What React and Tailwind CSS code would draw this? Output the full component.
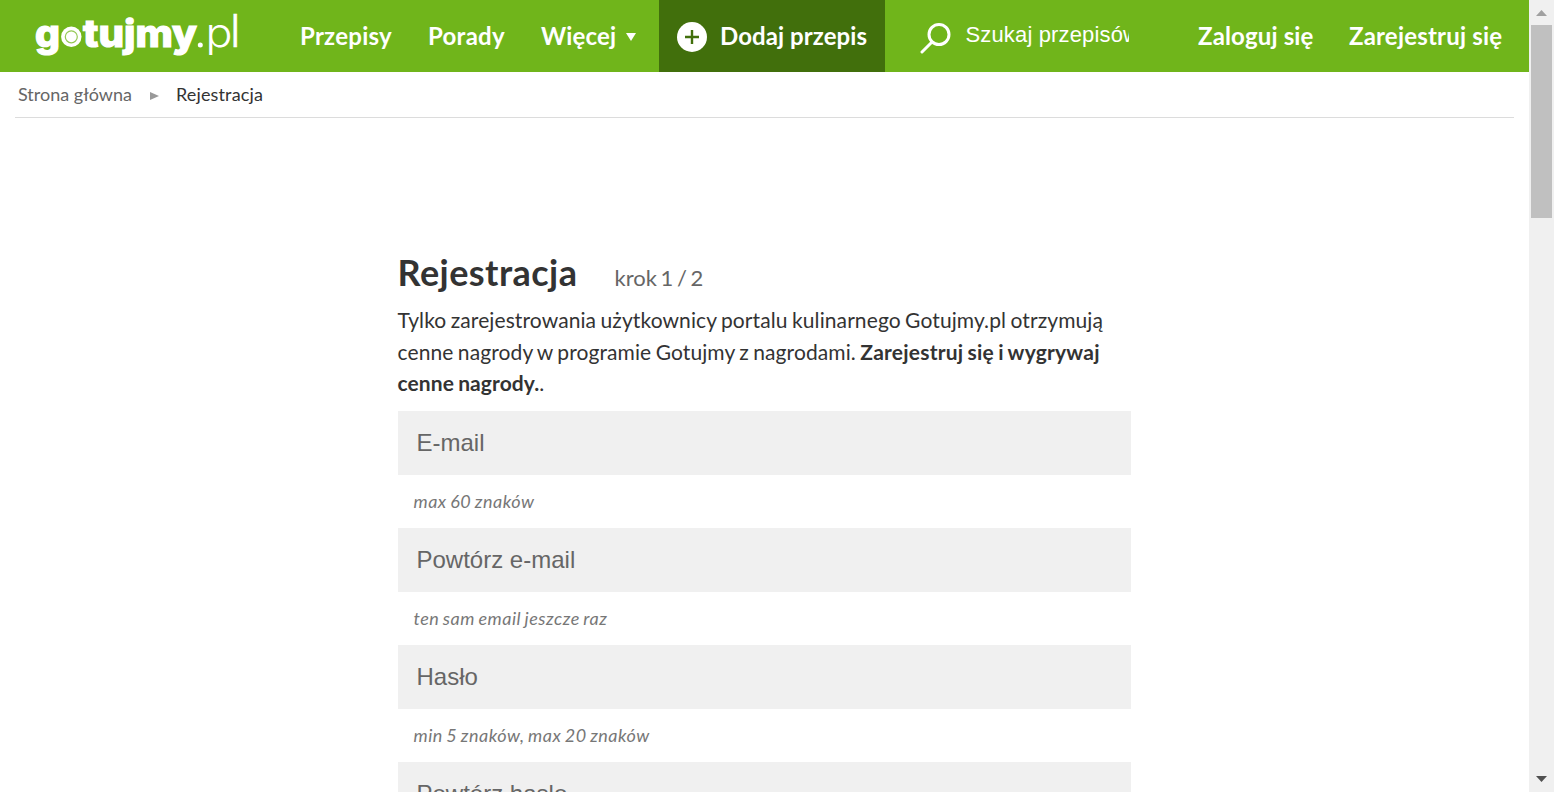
const nav = "flex h-[72px] items-center text-2xl font-bold leading-[72px] text-white whitespace-nowrap";

function Logo() {
  return (
    <svg className="block shrink-0" width="264" height="72" viewBox="0 0 264 72" fill="#fff" role="img" aria-label="gotujmy.pl">
      <g fontFamily="Inter, sans-serif" fontSize="37.5" fontWeight="800" stroke="#fff" strokeWidth="1.2">
        <text x="35" y="46.5" textLength="25" lengthAdjust="spacingAndGlyphs">g</text>
        <text x="83" y="46.5" textLength="114" lengthAdjust="spacingAndGlyphs">tujmy</text>
      </g>
      <circle cx="71.3" cy="36.8" r="10.2" />
      <circle cx="71.3" cy="36.8" r="6" fill="none" stroke="#70b51b" strokeOpacity="0.75" strokeWidth="1.2" />
      <circle cx="200.3" cy="45" r="2.5" />
      <g fontFamily="Inter, sans-serif" fontWeight="300">
        <text x="205.5" y="47" fontSize="40" textLength="27" lengthAdjust="spacingAndGlyphs">p</text>
        <text x="230" y="47" fontSize="45" stroke="#fff" strokeWidth="0.4">l</text>
      </g>
    </svg>
  );
}

function Header() {
  return (
    <header className="flex h-[72px] w-full bg-[#70b51b]">
      <Logo />
      <nav className="flex">
        <a className={`${nav} w-32 pl-9 tracking-[0.25px]`}>Przepisy</a>
        <a className={`${nav} w-[113px] pl-9 tracking-[0.25px]`}>Porady</a>
        <a className={`${nav} w-[154px] pl-9 tracking-[0.15px]`}>
          Więcej
          <svg className="ml-2.5 mt-0.5" width="10" height="8" viewBox="0 0 10 8" fill="#fff"><path d="M0 0h10L5 8z" /></svg>
        </a>
        <a className={`${nav} w-[226px] bg-[#416f0c] pl-[18px] tracking-[0.08px]`}>
          <svg className="mr-[13px] mt-0.5 shrink-0" width="30" height="30" viewBox="0 0 30 30">
            <circle cx="15" cy="15" r="15" fill="#fff" />
            <path d="M15 8v14M8 15h14" stroke="#416f0c" strokeWidth="2.4" />
          </svg>
          Dodaj przepis
        </a>
      </nav>
      <div className="flex w-[244px] items-center pl-[35px]">
        <svg className="mt-1 shrink-0" width="32" height="32" viewBox="0 0 32 32" fill="none" stroke="#fff" strokeWidth="3" strokeLinecap="round">
          <circle cx="19" cy="12.5" r="10" />
          <path d="M12 20L2 30" />
        </svg>
        <div className="mb-0.5 ml-[13.5px] w-[163.5px] overflow-hidden whitespace-nowrap font-['Liberation_Sans',sans-serif] text-[22px] leading-8 tracking-[0.15px] text-white">Szukaj przepisów</div>
      </div>
      <div className="flex grow">
        <a className={`${nav} w-[220px] pl-[69px] tracking-[0.15px]`}>Zaloguj się</a>
        <a className={`${nav} tracking-[0.2px]`}>Zarejestruj się</a>
      </div>
    </header>
  );
}

function Field({ label, hint }) {
  return (
    <div className="h-[117px]">
      <div className="flex h-16 items-center bg-[#f0f0f0] pl-[19px] font-['Liberation_Sans',sans-serif] text-2xl text-[#666]">{label}</div>
      <p className="pl-4 text-lg italic leading-[53px] tracking-[0.5px] text-[#777] [word-spacing:-1.2px]">{hint}</p>
    </div>
  );
}

function Scrollbar() {
  return (
    <div className="flex h-full w-[25px] shrink-0 flex-col items-center bg-[#f0f0f0]">
      <svg className="mt-[10px]" width="11" height="6" viewBox="0 0 11 6" fill="#a0a0a0"><path d="M0 6L5.5 0 11 6z" /></svg>
      <div className="mt-[9px] h-[193px] w-[21px] bg-[#c0c0c0]" />
      <svg className="mb-[10px] mt-auto" width="11" height="6" viewBox="0 0 11 6" fill="#505050"><path d="M0 0h11L5.5 6z" /></svg>
    </div>
  );
}

export default function App() {
  return (
    <div className="flex h-[792px] w-[1554px] overflow-hidden bg-white font-['Lato',sans-serif] text-[#333]">
      <div className="w-[1529px] shrink-0">
        <Header />
        <div className="mx-[15px] flex h-[46px] items-center border-b border-[#dcdcdc] pb-0.5 pl-[3px] text-lg text-[#333]">
          <span className="text-[#666]">Strona główna</span>
          <svg className="ml-[18px] mr-[17px] mt-1" width="9" height="8" viewBox="0 0 9 8" fill="#999"><path d="M0 0l9 4-9 4z" /></svg>
          <span className="tracking-[0.15px]">Rejestracja</span>
        </div>
        <main className="ml-[397.5px] mt-[129px] w-[733.5px]">
          <div className="flex items-baseline leading-[50px]">
            <h1 className="w-[217px] text-4xl font-bold leading-[50px] tracking-[0.45px]">Rejestracja</h1>
            <span className="text-[22px] text-[#666] [word-spacing:-2px]">krok 1 / 2</span>
          </div>
          <p className="mt-px h-[107px] whitespace-nowrap text-[21px] leading-[31.5px] tracking-[0.1px] [word-spacing:-1.1px]">
            Tylko zarejestrowania użytkownicy portalu kulinarnego Gotujmy.pl otrzymują<br />
            cenne nagrody w programie Gotujmy z nagrodami. <b className="tracking-[0.22px]">Zarejestruj się i wygrywaj</b><br /><b>cenne nagrody.</b>.
          </p>
          <Field label="E-mail" hint="max 60 znaków" />
          <Field label="Powtórz e-mail" hint="ten sam email jeszcze raz" />
          <Field label="Hasło" hint="min 5 znaków, max 20 znaków" />
          <Field label="Powtórz hasło" hint="" />
        </main>
      </div>
      <Scrollbar />
    </div>
  );
}
